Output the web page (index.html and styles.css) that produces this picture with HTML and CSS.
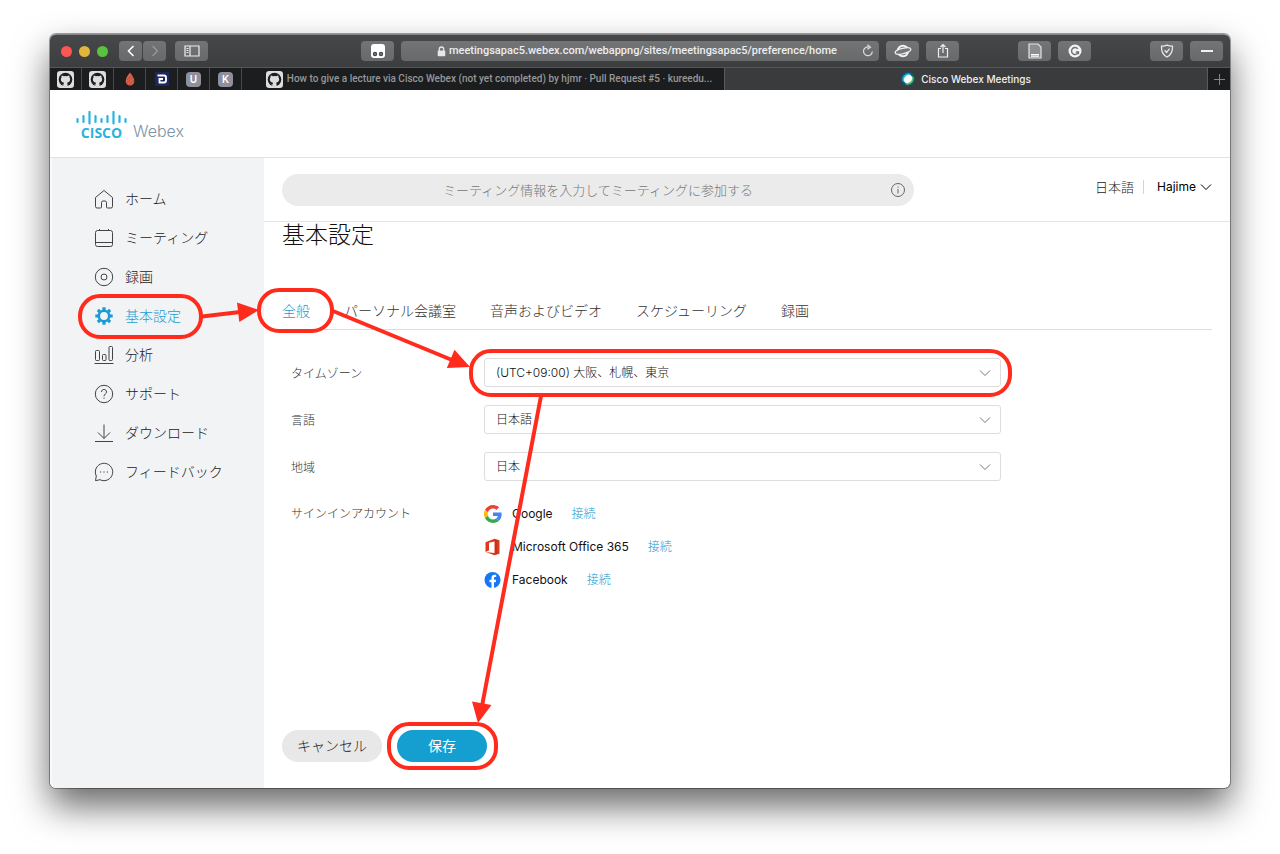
FILE: index.html
```html
<!DOCTYPE html>
<html lang="ja">
<head>
<meta charset="utf-8">
<meta name="viewport" content="width=device-width, initial-scale=1">
<title>Cisco Webex Meetings</title>
<link rel="stylesheet" href="styles.css">
</head>
<body>
<svg class="defs" width="0" height="0" aria-hidden="true">
  <symbol id="github" viewBox="0 0 16 16">
    <rect width="16" height="16" rx="3" fill="#dedede"/>
    <circle cx="8" cy="8" r="6.4" fill="#1c1d1e"/>
    <path d="M6.3 14.2v-1.6c-1.600.3-2-.6-2.400-1.200M6.600 11c-2.200-.3-3-1.500-3-3.200 0-.8.3-1.400.7-1.900-.1-.5-.1-1.200.2-1.700.8 0 1.400.5 1.900.8a6 6 0 0 1 3.200 0c.5-.3 1.100-.8 1.900-.8.3.5.3 1.200.2 1.700.4.5.7 1.100.7 1.900 0 1.700-.8 2.900-3 3.200.3.300.5.800.5 1.400v2.200H6.300v-2.200c0-.6.100-1 .3-1.400z" fill="#dedede"/>
  </symbol>
  <symbol id="chev" viewBox="0 0 12 8"><path d="M1 1.500l5 5 5-5" fill="none" stroke="currentColor"/></symbol>
</svg>
<div class="window">
  <header class="toolbar">
    <div class="tools tools-left">
      <span class="lights"><i class="red"></i><i class="yellow"></i><i class="green"></i></span>
      <span class="history">
        <button class="tool nav" aria-label="Back"><svg width="10" height="14" viewBox="0 0 10 14"><path d="M7.500 2L2.500 7l5 5" fill="none" stroke="#fff" stroke-width="1.600"/></svg></button>
        <button class="tool nav" aria-label="Forward"><svg width="10" height="14" viewBox="0 0 10 14"><path d="M2.500 2l5 5-5 5" fill="none" stroke="#98999b" stroke-width="1.300"/></svg></button>
      </span>
      <button class="tool" aria-label="Sidebar"><svg width="16" height="12" viewBox="0 0 16 12"><path d="M1 1h14v10H1zM6 1v10M2.500 3.500h2M2.500 5.500h2M2.500 7.500h2" fill="none" stroke="#eee" stroke-width="1.200"/></svg></button>
    </div>
    <div class="tools tools-mid">
      <button class="tool" aria-label="Extension"><svg width="16" height="16" viewBox="0 0 16 16"><rect x="1" y="1" width="14" height="14" rx="3" fill="#fff"/><circle cx="5" cy="11" r="2.200" fill="#444"/><circle cx="11" cy="11" r="2.200" fill="#444"/><circle cx="5" cy="11" r=".8" fill="#aaa"/><circle cx="11" cy="11" r=".8" fill="#aaa"/></svg></button>
      <div class="address">
        <svg width="9" height="11" viewBox="0 0 9 11"><path d="M2.300 5V3.200a2.200 2.200 0 0 1 4.400 0V5" fill="none" stroke="#e6e6e6" stroke-width="1.300"/><rect x=".7" y="4.500" width="7.600" height="5.800" rx="1" fill="#e6e6e6"/></svg>
        <input type="text" aria-label="Address" value="meetingsapac5.webex.com/webappng/sites/meetingsapac5/preference/home">
        <button class="reload" aria-label="Reload"><svg width="12" height="14" viewBox="0 0 12 14"><path d="M10.300 7.500a4.400 4.400 0 1 1-3-4.400" fill="none" stroke="#ddd" stroke-width="1.200"/><path d="M5.500.8l3 2.600-3.200 1.900" fill="none" stroke="#ddd" stroke-width="1.200"/></svg></button>
      </div>
      <button class="tool" aria-label="Planet"><svg width="18" height="16" viewBox="0 0 18 16"><circle cx="9" cy="8" r="5.200" fill="none" stroke="#f2f2f2" stroke-width="2"/><ellipse cx="9" cy="8" rx="8" ry="2.600" transform="rotate(-14 9 8)" fill="#77787a" stroke="#f2f2f2" stroke-width="1.300"/></svg></button>
      <button class="tool" aria-label="Share"><svg width="12" height="16" viewBox="0 0 12 16"><path d="M4 5.500H1.500v8.500h9V5.500H8M6 10V1.500M3.500 4L6 1.500 8.500 4" fill="none" stroke="#eee" stroke-width="1.200"/></svg></button>
    </div>
    <div class="tools tools-right">
      <button class="tool" aria-label="Page"><svg width="14" height="16" viewBox="0 0 14 16"><path d="M1 1h9l3 3v11H1z" fill="#8d8e90" stroke="#e4e4e4" stroke-width="1.200"/><path d="M3 11.500h8M3 13.200h8" stroke="#fff" stroke-width="1.200"/></svg></button>
      <button class="tool" aria-label="Grammar"><svg width="14" height="14" viewBox="0 0 14 14"><circle cx="7" cy="7" r="6.500" fill="#f4f4f4"/><path d="M9.800 4.800A3.500 3.500 0 1 0 10.400 8H7.800M10.400 7.600v2.600" fill="none" stroke="#717274" stroke-width="1.400"/></svg></button>
      <button class="tool shield" aria-label="Shield"><svg width="14" height="14" viewBox="0 0 14 14"><path d="M7 1.200c2 1 3.700 1.100 5.500 1C12.800 7.500 11 11 7 13 3 11 1.200 7.500 1.500 2.200c1.800.1 3.500 0 5.500-1zM4.600 6.300L6.600 8.400l3-3.700" fill="none" stroke="#e8e8e8" stroke-width="1.300"/></svg></button>
      <button class="tool" aria-label="Minus"><svg width="14" height="4" viewBox="0 0 14 4"><path d="M1 2h12" stroke="#fff" stroke-width="1.800"/></svg></button>
    </div>
  </header>

  <nav class="tabs" aria-label="Browser tabs">
    <button class="pin" aria-label="GitHub"><svg width="17" height="17"><use href="#github"/></svg></button>
    <button class="pin" aria-label="GitHub"><svg width="17" height="17"><use href="#github"/></svg></button>
    <button class="pin" aria-label="Flame"><svg width="10" height="14" viewBox="0 0 10 14"><path d="M5 .5C7 3 9.300 5.800 9.300 9 9.300 11.800 7.500 13.500 5 13.500S.7 11.800.7 9C.7 5.800 3 3 5 .5z" fill="#d9604c"/><path d="M2 8l4-4M2 11l6-6M4 12.500L9 8" stroke="#a8402f" stroke-width=".7"/></svg></button>
    <button class="pin" aria-label="D"><svg width="14" height="14" viewBox="0 0 14 14"><rect width="14" height="14" fill="#1c2660"/><path d="M2.500 3.500H9Q11 3.500 11 5.500v3Q11 10.500 9 10.500H4.500V7H8" fill="none" stroke="#fff" stroke-width="1.900"/></svg></button>
    <button class="pin"><span class="letter">U</span></button>
    <button class="pin"><span class="letter">K</span></button>
    <button class="tab"><svg width="17" height="17"><use href="#github"/></svg><span>How to give a lecture via Cisco Webex (not yet completed) by hjmr · Pull Request #5 · kureedu...</span></button>
    <button class="tab active"><svg width="14" height="14" viewBox="0 0 14 14"><circle cx="7" cy="7" r="7" fill="#075c7d"/><path d="M2 10A6 6 0 0 1 10 2z" fill="#18b9e8"/><path d="M12 4A6 6 0 0 1 4 12z" fill="#63c04f"/><ellipse cx="7" cy="7" rx="4.700" ry="3.700" transform="rotate(-45 7 7)" fill="#fff"/></svg><span>Cisco Webex Meetings</span></button>
    <button class="new-tab" aria-label="New tab"><svg width="11" height="11" viewBox="0 0 11 11"><path d="M5.500 0v11M0 5.500h11" stroke="#858688"/></svg></button>
  </nav>

  <div class="brand">
    <span class="cisco">
      <svg width="51" height="14" viewBox="0 0 51 14"><path d="M1.500 8v3M7.500 5v6M13.500 1v11.500M19.500 5v6M25.500 8v3M31.500 5v6M37.500 1v11.500M43.500 5v6M49.500 8v3" stroke="#2ab4dd" stroke-width="2.200" stroke-linecap="round"/></svg>
      <b>CISCO</b>
    </span>
    <span class="webex">Webex</span>
  </div>

  <div class="body">
    <nav class="side" aria-label="メニュー">
      <a href="#"><svg viewBox="0 0 20 20"><path d="M10 1.500L1.500 8.500v9q0 1.500 1.500 1.500h3.500q1 0 1-1v-4.500q0-1.500 1.500-1.500h2q1.500 0 1.500 1.500v4.500q0 1 1 1H17q1.500 0 1.500-1.500v-9z"/></svg>ホーム</a>
      <a href="#"><svg viewBox="0 0 20 20"><rect x="1.500" y="2.500" width="17" height="16" rx="2"/><path d="M1.500 14.500h17M5.500 1v1.500M14.500 1v1.500"/></svg>ミーティング</a>
      <a href="#"><svg viewBox="0 0 20 20"><circle cx="10" cy="10" r="8.700"/><circle cx="10" cy="10" r="3"/></svg>録画</a>
      <a href="#" class="current" aria-current="page"><svg viewBox="0 0 20 20"><circle cx="10" cy="10" r="5.200" stroke-width="2.600"/><path stroke-width="3.200" d="M10 4V1.300M10 16v2.700M4 10H1.300M16 10h2.700M5.800 5.800L3.900 3.900M14.200 5.800l1.900-1.900M5.800 14.200l-1.900 1.900M14.200 14.200l1.900 1.900"/></svg>基本設定</a>
      <a href="#"><svg viewBox="0 0 20 20"><rect x="1.500" y="5.500" width="4" height="10" rx="1"/><rect x="8.500" y="9.500" width="3.500" height="6" rx="1"/><rect x="15" y="1.500" width="3.500" height="14" rx="1"/><path d="M.5 18.500h19"/></svg>分析</a>
      <a href="#"><svg viewBox="0 0 20 20"><circle cx="10" cy="10" r="8.700"/><path d="M7.500 8c0-3.400 5-3.400 5 0 0 2-2.500 2-2.500 4.200M10 13.500v1.300"/></svg>サポート</a>
      <a href="#"><svg viewBox="0 0 20 20"><path d="M10 1.500v14M4 9.500l6 6 6-6M1 18.500h18"/></svg>ダウンロード</a>
      <a href="#"><svg viewBox="0 0 20 20"><path d="M1.500 18.700L2.300 14A8.700 8.700 0 1 1 6 17.700z"/><path d="M6 10h1.200M9.400 10h1.200M12.800 10H14"/></svg>フィードバック</a>
    </nav>

    <main class="main">
      <div class="topbar">
        <div class="join">
          <input type="text" aria-label="ミーティング情報" placeholder="ミーティング情報を入力してミーティングに参加する">
          <button aria-label="情報"><svg width="16" height="16" viewBox="0 0 16 16"><circle cx="8" cy="8" r="6.500" fill="none" stroke="#666"/><path d="M8 7v4.500M8 4.500v1.200" stroke="#666"/></svg></button>
        </div>
        <div class="user">
          <button class="lang">日本語</button>
          <button class="name">Hajime <svg width="12" height="8"><use href="#chev"/></svg></button>
        </div>
      </div>

      <div class="content">
        <h1>基本設定</h1>
        <nav class="sections" aria-label="設定">
          <a href="#" class="current">全般</a>
          <a href="#">パーソナル会議室</a>
          <a href="#">音声およびビデオ</a>
          <a href="#">スケジューリング</a>
          <a href="#">録画</a>
        </nav>

        <form class="form">
          <label for="tz">タイムゾーン</label>
          <span class="select"><select id="tz"><option>(UTC+09:00) 大阪、札幌、東京</option></select><svg width="12" height="8"><use href="#chev"/></svg></span>
          <label for="lang">言語</label>
          <span class="select"><select id="lang"><option>日本語</option></select><svg width="12" height="8"><use href="#chev"/></svg></span>
          <label for="region">地域</label>
          <span class="select"><select id="region"><option>日本</option></select><svg width="12" height="8"><use href="#chev"/></svg></span>
          <span class="caption">サインインアカウント</span>
          <ul class="accounts">
            <li><svg width="18" height="18" viewBox="0 0 48 48"><path fill="#EA4335" d="M24 9.500c3.500 0 6.700 1.200 9.200 3.600l6.900-6.900C35.900 2.400 30.500 0 24 0 14.600 0 6.500 5.400 2.600 13.200l8 6.200C12.400 13.700 17.700 9.500 24 9.500z"/><path fill="#4285F4" d="M47 24.600c0-1.600-.2-3.100-.4-4.600H24v9h12.900c-.6 3-2.200 5.500-4.700 7.200l7.700 6C44.400 38 47 31.800 47 24.600z"/><path fill="#FBBC05" d="M10.500 28.600a14.500 14.500 0 0 1 0-9.200l-8-6.200a24 24 0 0 0 0 21.600z"/><path fill="#34A853" d="M24 48c6.500 0 11.900-2.100 15.900-5.800l-7.700-6c-2.200 1.500-4.900 2.300-8.200 2.300-6.300 0-11.600-4.200-13.500-9.900l-8 6.200C6.500 42.600 14.600 48 24 48z"/></svg>Google<a href="#">接続</a></li>
            <li><svg width="18" height="18" viewBox="0 0 18 18"><path d="M1.500 4.200L10.500.8l5 1.500v13.400l-5 1.500-9-3.300 9 1V3.400L5 4.800v7.800l-3.500 1.300z" fill="#dc3a1c"/><path d="M12 2v14" stroke="#b72412" stroke-width="1"/></svg>Microsoft Office 365<a href="#">接続</a></li>
            <li><svg width="18" height="18" viewBox="0 0 18 18"><circle cx="8.500" cy="9" r="8" fill="#1777f2"/><path d="M7.500 17v-5.800h-2V8.800h2V7c0-2.100 1.200-3.200 3.100-3.200.8 0 1.600.1 1.600.1v2h-1c-1 0-1.200.6-1.200 1.200v1.700h2.100l-.4 2.400H10V17z" fill="#fff"/></svg>Facebook<a href="#">接続</a></li>
          </ul>
        </form>

        <div class="actions">
          <button class="btn">キャンセル</button>
          <button class="btn primary">保存</button>
        </div>
      </div>
    </main>
  </div>

  <svg class="marks" width="1180" height="754" viewBox="50 34 1180 754" aria-hidden="true">
    <g fill="none" stroke="#ff2b1c" stroke-width="4">
      <rect x="80" y="296" width="121" height="41" rx="20"/>
      <rect x="259" y="290" width="73" height="41" rx="20"/>
      <rect x="471" y="351" width="539" height="44" rx="20"/>
      <rect x="389" y="724" width="107" height="44" rx="20"/>
      <path d="M202 316.500L240 312M333 311L452 360M541 396L482 706"/>
    </g>
    <path d="M259 310l-22-7.500 2.300 19.500zM470 367l-15.500-17.300-7.700 18.200zM478 723l-6-21.500 19.500 3.500z" fill="#ff2b1c"/>
  </svg>
</div>
</body>
</html>
```

FILE: styles.css
```css
* { box-sizing: border-box; }
body {
  margin: 0;
  min-height: 100vh;
  padding: 34px 50px 66px;
  display: flex;
  background: #fff;
  color: #222;
  font: 300 13px/20px Inter, "Noto Sans CJK JP", sans-serif;
}
button, input, select { font: inherit; color: inherit; margin: 0; padding: 0; border: 0; background: none; }
a { color: inherit; text-decoration: none; }
svg { display: block; flex: none; }
.defs { position: absolute; }

.window {
  position: relative;
  flex: 1;
  display: flex;
  flex-direction: column;
  border-radius: 6px;
  background: #fff;
  box-shadow: 0 0 0 1px rgba(0, 0, 0, .35), 0 18px 36px rgba(0, 0, 0, .6);
}

/* browser toolbar */
.toolbar {
  display: grid;
  grid-template-columns: 311fr 598fr 271fr;
  height: 34px;
  border-radius: 6px 6px 0 0;
  border-top: 1px solid #858688;
  border-bottom: 1px solid #565759;
  background: linear-gradient(#47484a, #3c3d3f);
}
.tools { display: flex; align-items: center; gap: 7px; min-width: 0; }
.tools-left { padding-left: 11px; gap: 9px; }
.tools-right { padding-right: 7px; justify-content: flex-end; }
.lights { display: flex; gap: 7px; margin-right: 2px; }
.lights i { width: 11px; height: 11px; border-radius: 50%; }
.red { background: #fb5753; }
.yellow { background: #e2b63e; }
.green { background: #5bc23f; }
.history { display: flex; gap: 1px; }
.tool {
  width: 33px;
  height: 20px;
  display: grid;
  place-items: center;
  flex: none;
  border-radius: 4px;
  background: linear-gradient(#737476, #68696b);
}
.nav { width: 23px; }
.shield { margin-left: 52px; }
.address {
  flex: 1;
  min-width: 0;
  height: 20px;
  padding: 0 5px 0 36px;
  display: flex;
  align-items: center;
  gap: 3px;
  border-radius: 4px;
  background: linear-gradient(#737476, #68696b);
}
.address input { flex: 1; min-width: 0; color: #ededed; font-family: Roboto, sans-serif; font-weight: 500; font-size: 11px; }

/* browser tabs */
.tabs { display: flex; height: 22px; background: #1c1d1e; color: #96979a; font-size: 10px; font-weight: 500; }
.pin { width: 32px; flex: none; display: grid; place-items: center; border-right: 1px solid #47484a; }
.letter { width: 15px; height: 15px; border-radius: 4px; background: #8f909c; color: #fff; font-size: 10px; line-height: 15px; font-weight: 600; }
.tab { flex: 1 1 0; min-width: 0; padding: 0 2px 0 14px; display: flex; align-items: center; justify-content: center; gap: 4px; border-right: 1px solid #5a5b5d; font-family: Roboto, sans-serif; }
.tab span { overflow: hidden; white-space: nowrap; text-overflow: ellipsis; }
.tab.active { background: #3a3b3d; color: #f0f0f0; padding: 0 8px; gap: 6px; font-family: inherit; }
.new-tab { width: 22px; flex: none; display: grid; place-items: center; }

/* site header */
.brand { display: flex; align-items: flex-end; gap: 6px; height: 68px; padding: 0 26px 17px; border-bottom: 1px solid #e3e3e4; }
.cisco { display: flex; flex-direction: column; align-items: center; gap: 1px; color: #2ab4dd; }
.cisco b { font: 700 14px/14px "Open Sans", sans-serif; }
.webex { color: #7b93a5; font-size: 16px; line-height: 18px; }

.body { flex: 1; display: flex; }
.side { width: 214px; flex: none; padding: 21px 0 0 42px; border-left: 2px solid #f9fafa; border-radius: 0 0 0 6px; background: #f2f3f5; }
.side a { display: flex; align-items: center; gap: 11px; height: 39px; font-size: 14px; }
.side svg { width: 20px; height: 20px; fill: none; stroke: #444; stroke-width: 1; }
.side .current { color: #1b9bd3; }
.side .current svg { stroke: currentColor; }

.main { flex: 1; min-width: 0; display: flex; flex-direction: column; }
.topbar { display: flex; justify-content: space-between; align-items: flex-start; height: 64px; padding: 16px 18px 0; border-bottom: 1px solid #e5e5e6; }
.join { flex: 0 1 632px; display: flex; align-items: center; height: 32px; padding: 0 8px 0 24px; border-radius: 16px; background: #ebebeb; }
.join input { flex: 1; min-width: 0; text-align: center; }
.join input::placeholder { color: #777; opacity: 1; }
.user { display: flex; align-items: center; padding-top: 6px; }
.lang { padding-right: 9px; line-height: 14px; border-right: 1px solid #d5d5d5; }
.name { display: flex; align-items: center; gap: 4px; padding-left: 13px; color: #000; font-size: 12px; font-weight: 400; line-height: 14px; }

.content { flex: 1; display: flex; flex-direction: column; padding: 0 18px 26px; }
h1 { margin: 0; color: #111; font-size: 23px; line-height: 26px; font-weight: 300; }
.sections { display: flex; gap: 34px; margin-top: 53px; padding-bottom: 8px; border-bottom: 1px solid #ddd; font-size: 14px; color: #333; }
.sections .current { color: #1b9bd3; }

.form { display: grid; grid-template-columns: 193px minmax(0, 517px); row-gap: 18px; align-items: center; padding: 28px 0 0 9px; color: #333; font-size: 12px; }
.form label { padding-top: 3px; }
.select { position: relative; color: #777; }
.select select { display: block; width: 100%; height: 29px; padding: 0 32px 0 11px; appearance: none; border: 1px solid #ddd; border-radius: 3px; background: #fff; color: #111; }
.select svg { position: absolute; right: 10px; top: 11px; pointer-events: none; }
.caption { align-self: start; padding-top: 5px; }
.accounts { display: grid; gap: 13px; margin: 0; padding: 5px 0 0; list-style: none; color: #111; font-weight: 400; }
.accounts li { display: flex; align-items: center; gap: 10px; }
.accounts a { margin-left: 9px; color: #1b9bd3; font-weight: 300; }

.actions { display: flex; gap: 15px; margin-top: auto; }
.btn { height: 32px; padding: 0 15px 1px; border-radius: 16px; background: #e8e8e8; font-size: 14px; }
.primary { padding: 0 31px 1px; background: #149fd0; color: #fff; font-weight: 400; }

/* callouts drawn over the page */
.marks { position: absolute; left: 0; top: 0; pointer-events: none; }
```
